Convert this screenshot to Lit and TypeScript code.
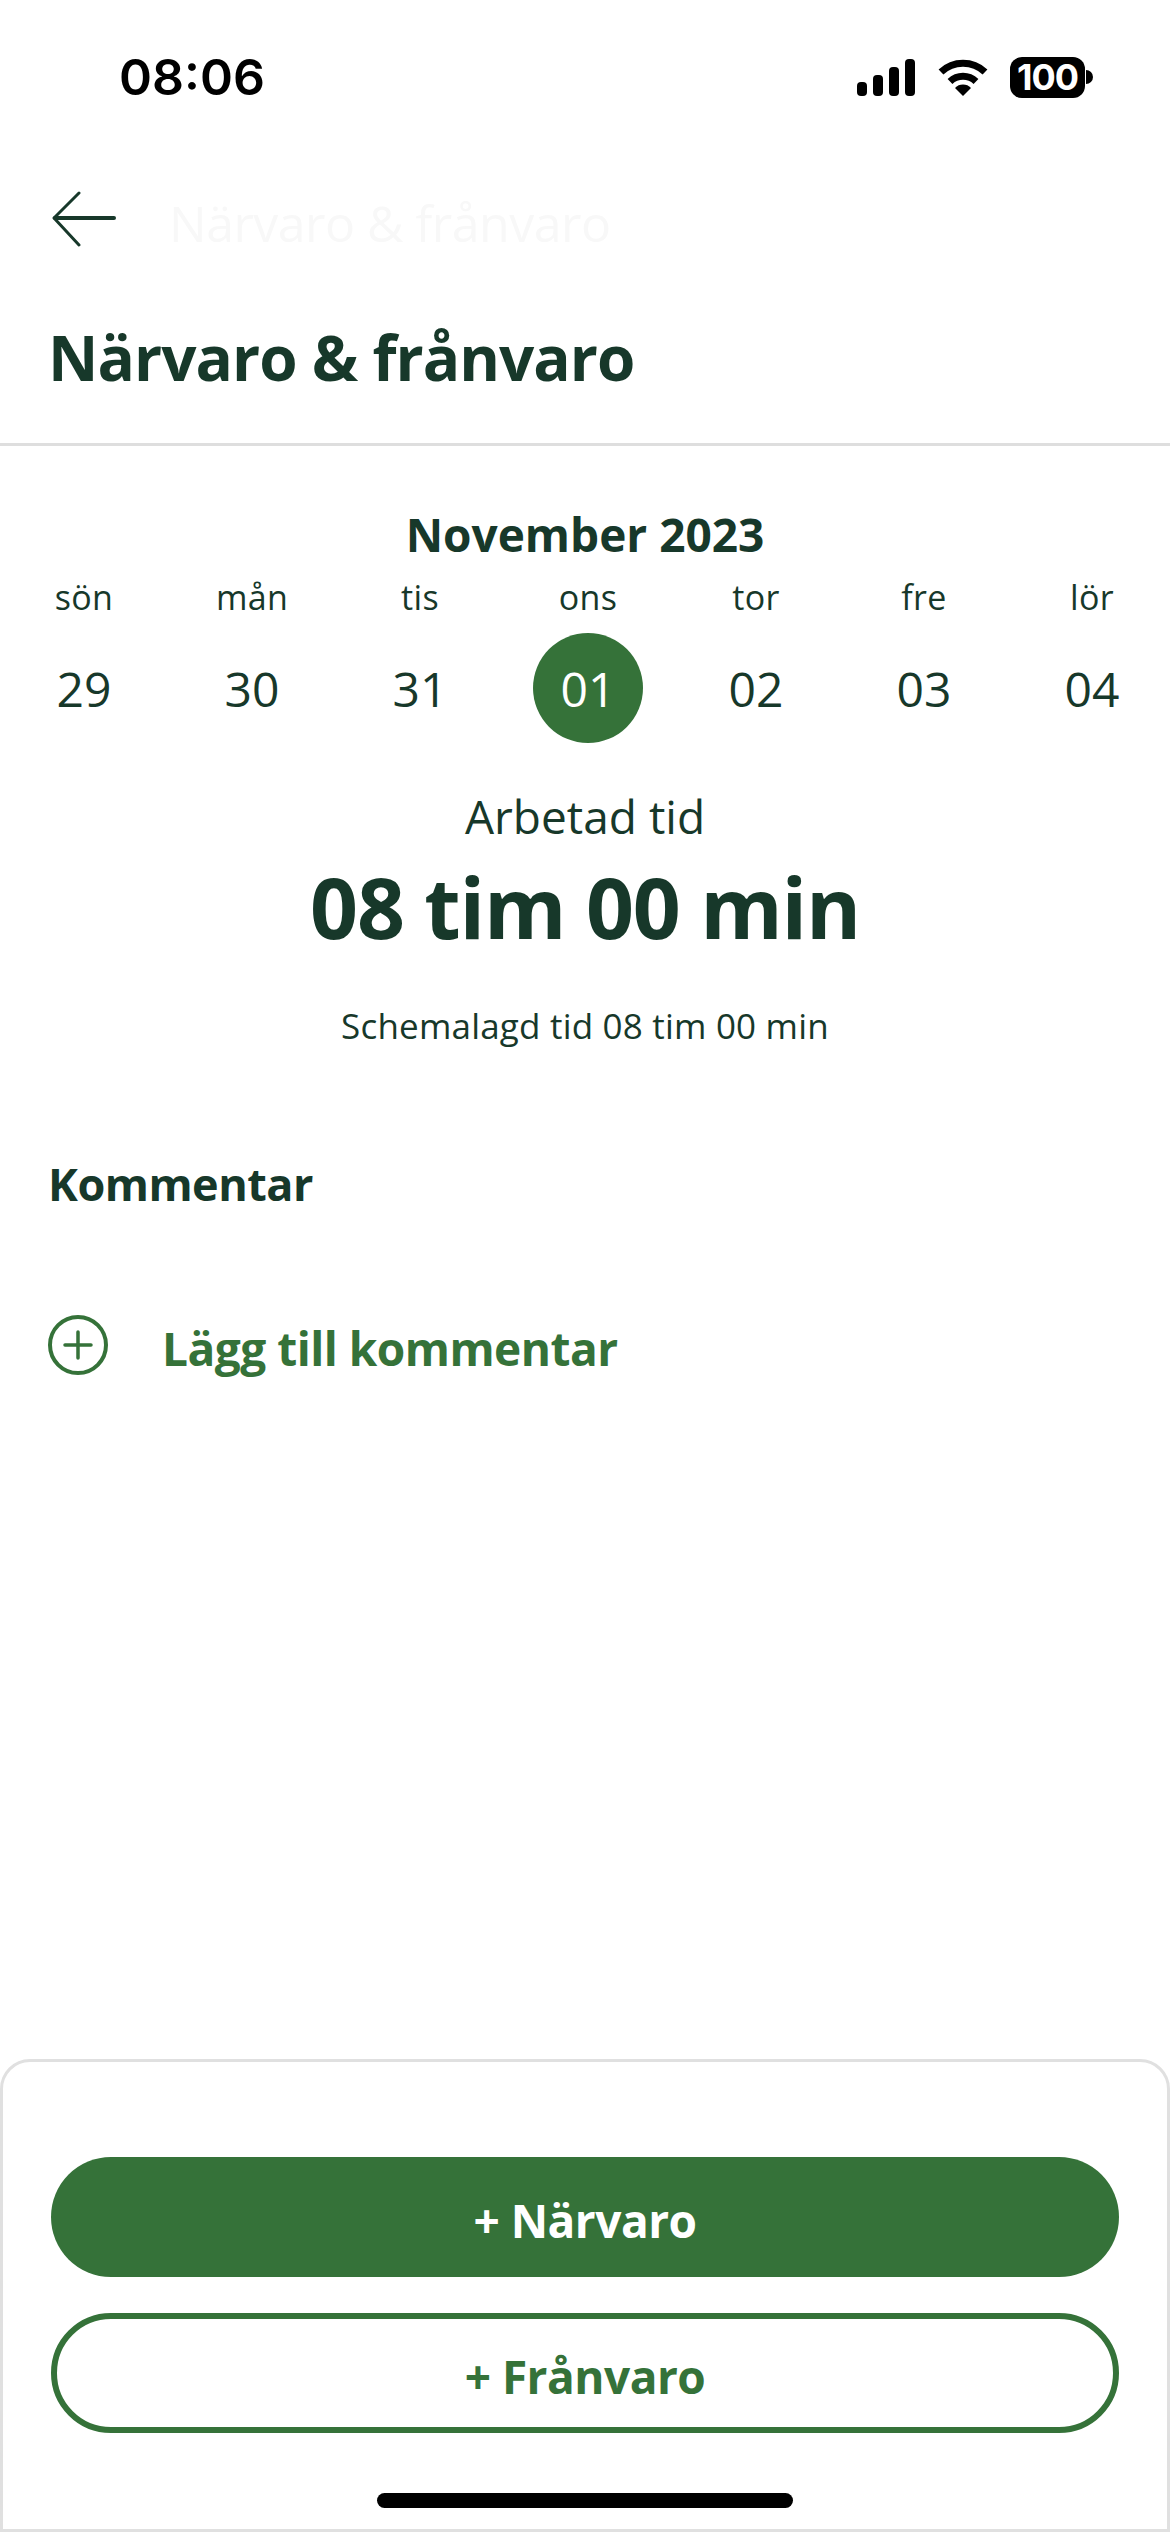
import { LitElement, html, css } from "lit";
import { customElement } from "lit/decorators.js";

const DAYS = [
  ["sön", "29"], ["mån", "30"], ["tis", "31"], ["ons", "01"], ["tor", "02"], ["fre", "03"], ["lör", "04"],
];

@customElement("app-root")
export class AppRoot extends LitElement {
  static styles = css`
    :host { display: block; width: 1170px; height: 2532px; background: #fff; overflow: hidden; font-family: "Open Sans", "Noto Sans", sans-serif; color: #17382a; }
    .page { display: flex; flex-direction: column; height: 2532px; }
    .status { height: 154px; flex: none; display: flex; justify-content: space-between; align-items: center; padding: 0 77px 0 119px; box-sizing: border-box; }
    .time { font: 600 50px/60px "Inter", sans-serif; color: #000; }
    .icons { display: flex; align-items: center; }
    .bars { display: block; width: 58px; height: 37px; margin-right: 23px; }
    .wifi { display: block; width: 50px; height: 37px; margin-right: 22px; }
    .battery { width: 75px; height: 41px; border-radius: 12px; background: #000; color: #fff; font: 700 36px/41px "Inter", sans-serif; text-align: center; letter-spacing: -1px; }
    .nub { width: 7px; height: 14px; background: #000; border-radius: 0 7px 7px 0; margin-left: 1px; }
    .back { height: 128px; flex: none; padding: 2px 0 0 52px; display: flex; align-items: center; box-sizing: border-box; }
    .back svg { display: block; width: 64px; height: 56px; }
    .ghost { margin-left: 53px; font-size: 50px; font-weight: 400; color: #f8f8f8; padding-top: 8px; letter-spacing: -0.5px; }
    .title { font-size: 62px; font-weight: 700; margin: 0; padding: 0 48px; height: 164px; box-sizing: border-box; flex: none; line-height: 82px; padding-top: 34px; letter-spacing: -0.95px; border-bottom: 3px solid #dedede; }
    .month { text-align: center; font-size: 46px; font-weight: 700; margin-top: 58px; line-height: 60px; }
    .week { display: grid; grid-template-columns: repeat(7, 168px); margin-top: 11px; }
    .day { display: flex; flex-direction: column; align-items: center; }
    .name { font-size: 34px; line-height: 44px; letter-spacing: 0.3px; }
    .num { width: 110px; height: 110px; border-radius: 50%; display: flex; align-items: center; justify-content: center; font-size: 48px; margin-top: 14px; }
    .num.sel { background: #357239; color: #fff; }
    .worked { text-align: center; font-size: 46px; margin-top: 43px; line-height: 60px; }
    .total { text-align: center; font-size: 84px; font-weight: 700; line-height: 110px; margin-top: 6px; letter-spacing: -1.2px; }
    .sched { text-align: center; font-size: 35px; line-height: 44px; margin-top: 42px; letter-spacing: 0.2px; }
    .section { font-size: 45px; font-weight: 700; margin: 0; padding: 0 48px; line-height: 60px; margin-top: 106px; letter-spacing: -0.5px; }
    .add { display: flex; align-items: center; padding-left: 48px; margin-top: 98px; color: #357239; }
    .add svg { display: block; width: 60px; height: 60px; flex: none; }
    .add span { margin-left: 54px; font-size: 46px; font-weight: 700; line-height: 60px; letter-spacing: -0.5px; padding-top: 6px; }
    .sheet { margin-top: auto; height: 473px; box-sizing: border-box; border: 3px solid #e0e0e0; border-radius: 30px 30px 0 0; padding: 95px 48px 0; display: flex; flex-direction: column; align-items: center; }
    .btn { width: 100%; height: 120px; box-sizing: border-box; border-radius: 60px; display: flex; align-items: center; justify-content: center; font-size: 46px; font-weight: 700; letter-spacing: -0.5px; padding-top: 6px; }
    .btn.primary { background: #357239; color: #fff; }
    .btn.outline { border: 6px solid #357239; color: #357239; margin-top: 36px; }
    .home { width: 416px; height: 15px; background: #000; border-radius: 8px; margin-top: 60px; }
  `;

  render() {
    return html`<div class="page">
      <div class="status">
        <div class="time">08:06</div>
        <div class="icons">
          <svg class="bars" viewBox="0 0 58 37">
            <rect x="0" y="23" width="10" height="14" rx="4"></rect>
            <rect x="16" y="16" width="10" height="21" rx="4"></rect>
            <rect x="32" y="8" width="10" height="29" rx="4"></rect>
            <rect x="48" y="0" width="10" height="37" rx="4"></rect>
          </svg>
          <svg class="wifi" viewBox="0 0 50 37">
            <path d="M3 13 A32 32 0 0 1 47 13" fill="none" stroke="#000" stroke-width="7"></path>
            <path d="M12 22.5 A19 19 0 0 1 38 22.5" fill="none" stroke="#000" stroke-width="7"></path>
            <path d="M17 29 L25 37 L33 29 A11 11 0 0 0 17 29 Z"></path>
          </svg>
          <div class="battery">100</div>
          <div class="nub"></div>
        </div>
      </div>
      <div class="back">
        <svg viewBox="0 0 64 56" fill="none" stroke="#17382a" stroke-linecap="round" stroke-linejoin="round">
          <path d="M27 2 L2 27 L27 54" stroke-width="3"></path>
          <path d="M3 27 H62" stroke-width="4"></path>
        </svg>
        <span class="ghost">Närvaro &amp; frånvaro</span>
      </div>
      <h1 class="title">Närvaro &amp; frånvaro</h1>
      <div class="month">November 2023</div>
      <div class="week">
        ${DAYS.map(([n, d]) => html`<div class="day">
          <div class="name">${n}</div>
          <div class="num ${d === "01" ? "sel" : ""}">${d}</div>
        </div>`)}
      </div>
      <div class="worked">Arbetad tid</div>
      <div class="total">08 tim 00 min</div>
      <div class="sched">Schemalagd tid 08 tim 00 min</div>
      <h2 class="section">Kommentar</h2>
      <div class="add">
        <svg viewBox="0 0 60 60" fill="none" stroke="#357239">
          <circle cx="30" cy="30" r="28" stroke-width="4"></circle>
          <path d="M17 30 H43 M30 17 V43" stroke-width="3.5" stroke-linecap="round"></path>
        </svg>
        <span>Lägg till kommentar</span>
      </div>
      <div class="sheet">
        <div class="btn primary">+ Närvaro</div>
        <div class="btn outline">+ Frånvaro</div>
        <div class="home"></div>
      </div>
    </div>`;
  }
}
